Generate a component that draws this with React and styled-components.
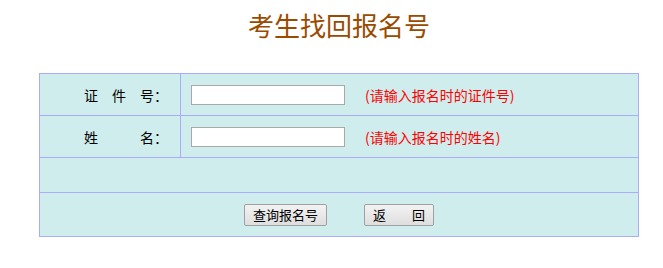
import styled, { createGlobalStyle } from 'styled-components';

const GlobalStyle = createGlobalStyle`
  body {
    margin: 0;
    background: #fff;
    font-family: "Microsoft YaHei", "Noto Sans CJK SC", sans-serif;
  }
`;

const Page = styled.div`
  width: 600px;
  padding-left: 39px;
`;

const Title = styled.h1`
  margin: 0;
  height: 50px;
  line-height: 50px;
  text-align: center;
  font-size: 26px;
  font-weight: normal;
  color: #994c00;
`;

const Form = styled.div`
  margin-top: 23px;
  border: 1px solid #aaaaff;
  background: #cfeded;
`;

const Row = styled.div`
  display: grid;
  grid-template-columns: ${(p) => (p.$full ? '1fr' : '141px 1fr')};
  height: ${(p) => p.$h}px;
  & + & {
    border-top: 1px solid #aaaaff;
  }
`;

const LabelCell = styled.div`
  display: flex;
  align-items: center;
  justify-content: flex-end;
  padding-right: 12px;
  border-right: 1px solid #aaaaff;
  font-size: 14px;
  color: #000;
  white-space: pre;
`;

const FieldCell = styled.div`
  display: flex;
  align-items: center;
  padding-left: 10px;
`;

const Input = styled.input`
  box-sizing: border-box;
  width: 154px;
  height: 20px;
  margin: 0;
  border: 1px solid #a9a9a9;
  background: #fff;
  outline: none;
`;

const Hint = styled.span`
  margin-left: 20px;
  font-size: 14px;
  color: #ff0000;
`;

const ButtonCell = styled.div`
  display: flex;
  align-items: center;
  justify-content: center;
  gap: 37px;
`;

const Button = styled.button`
  box-sizing: border-box;
  height: 22px;
  padding: 0 8px;
  border: 1px solid #a0a0a0;
  border-radius: 2px;
  background: linear-gradient(#f3f3f3, #dedede);
  font-family: "Microsoft YaHei", "Noto Sans CJK SC", sans-serif;
  font-size: 13px;
  color: #000;
  white-space: pre;
  line-height: 20px;
`;

export default function App() {
  return (
    <>
      <GlobalStyle />
      <Page>
        <Title>考生找回报名号</Title>
        <Form>
          <Row $h={41}>
            <LabelCell>证　件　号：</LabelCell>
            <FieldCell>
              <Input type="text" />
              <Hint>(请输入报名时的证件号)</Hint>
            </FieldCell>
          </Row>
          <Row $h={41}>
            <LabelCell>姓　　　名：</LabelCell>
            <FieldCell>
              <Input type="text" />
              <Hint>(请输入报名时的姓名)</Hint>
            </FieldCell>
          </Row>
          <Row $h={34} $full />
          <Row $h={43} $full>
            <ButtonCell>
              <Button>查询报名号</Button>
              <Button>返　　回</Button>
            </ButtonCell>
          </Row>
        </Form>
      </Page>
    </>
  );
}
